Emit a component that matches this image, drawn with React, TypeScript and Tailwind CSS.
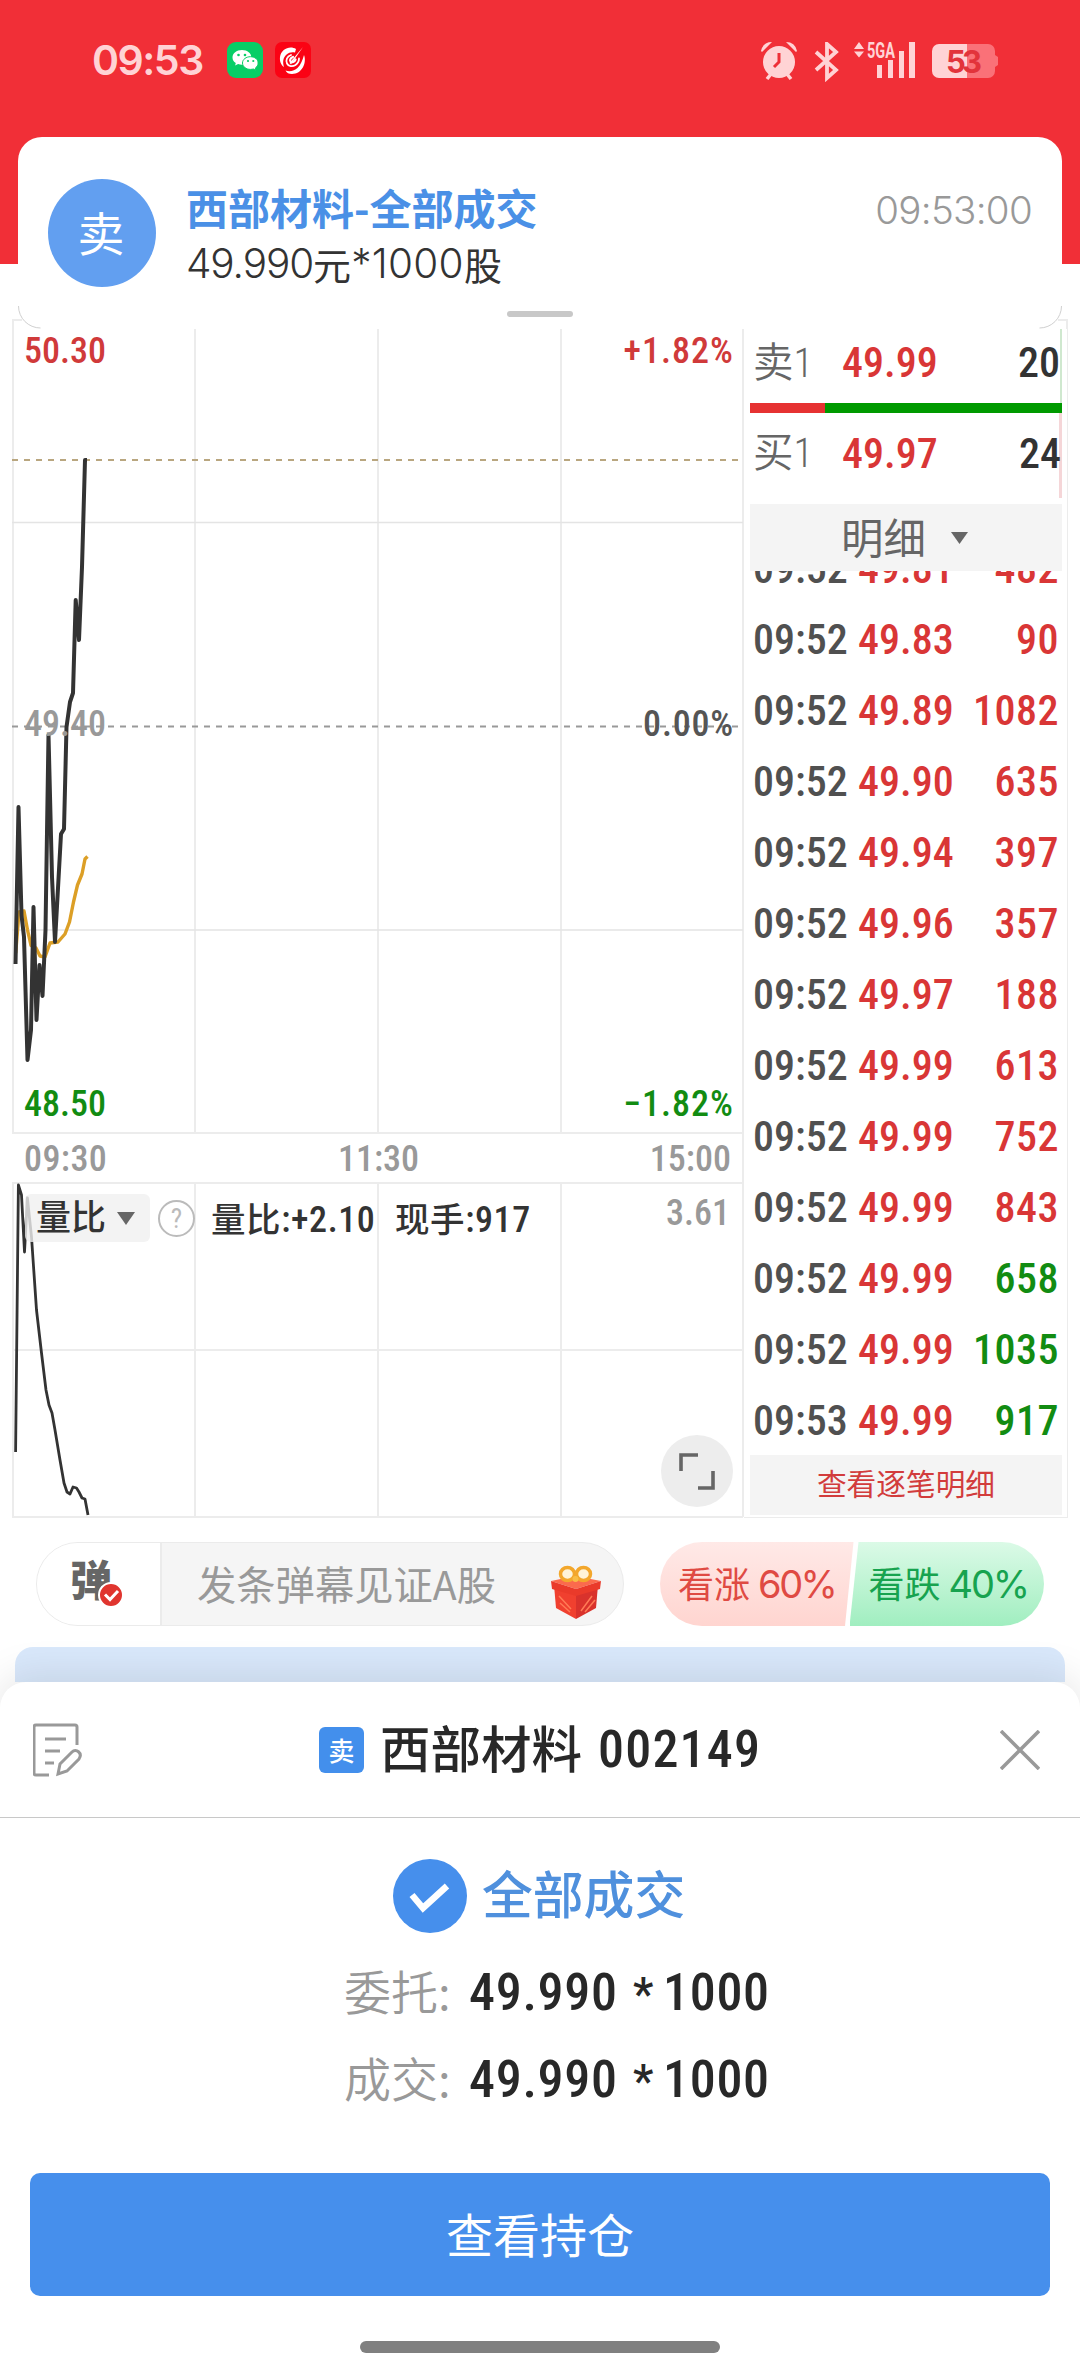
import React from "react";

const PRICE =
  "15.5,964 18.5,807 21.5,915 24,937 27.5,1060 31,1030 33.5,907 36.5,1020 39.5,965 42.5,996 45.5,930 48.5,735 52,877 55,942 61,834 64,829 66.5,727 70,702 73,693 75.7,600 79,640 82,567 85,460 87,460";
const AVERAGE =
  "15.7,953 19,912 24,911 27.5,930 31,945.5 36,948 40,956 45,957 50,943 58,942 65,934 69.5,922 73.5,902 77.5,885 82,874 85,859 87.5,856.5";
const RATIO =
  "15.6,1452 18.4,1185 21.5,1195 24.5,1252 27.4,1198 31.5,1237 36.5,1310 41.5,1353 46,1390 49,1405 52,1413 55,1430 60,1460 64,1483 67,1492 70,1494 73,1487 76.5,1488 79,1492 82,1498 85,1499 88,1515";

const trades = [
  { time: "09:52", price: "49.81", qty: "482", up: true },
  { time: "09:52", price: "49.83", qty: "90", up: true },
  { time: "09:52", price: "49.89", qty: "1082", up: true },
  { time: "09:52", price: "49.90", qty: "635", up: true },
  { time: "09:52", price: "49.94", qty: "397", up: true },
  { time: "09:52", price: "49.96", qty: "357", up: true },
  { time: "09:52", price: "49.97", qty: "188", up: true },
  { time: "09:52", price: "49.99", qty: "613", up: true },
  { time: "09:52", price: "49.99", qty: "752", up: true },
  { time: "09:52", price: "49.99", qty: "843", up: true },
  { time: "09:52", price: "49.99", qty: "658", up: false },
  { time: "09:52", price: "49.99", qty: "1035", up: false },
  { time: "09:53", price: "49.99", qty: "917", up: false },
];

const StatusBar = () => {
  return (
    <div className="flex h-[137px] items-start justify-between pl-[92px] pr-[81px] pt-[42px] text-[#ffd3d5]">
      <div className="flex items-center">
        <span className="w-[135px] font-['Inter'] text-[41px] font-semibold leading-[36px] tracking-[-1.500px]">09:53</span>
        <svg width="36" height="36" viewBox="0 0 36 36">
          <rect width="36" height="36" rx="9" fill="#07ce66" />
          <path d="M15 8c-5.500 0-9.500 3.300-9.500 7.400 0 2.400 1.300 4.300 3.300 5.600l-.7 2.600 3-1.500c1.200.4 2.500.6 3.900.6 5.300 0 9.400-3.300 9.400-7.300S20.400 8 15 8z" fill="#fff" />
          <path d="M23.500 14.700c-4.400 0-8 2.700-8 6.300s3.600 6.400 8 6.400c1.100 0 2-.2 2.900-.4l2.400 1.400-.5-2.300c1.700-1.200 2.800-3 2.800-5.100 0-3.600-3.300-6.300-7.600-6.300z" fill="#fff" stroke="#07ce66" strokeWidth="1" />
          <circle cx="11.500" cy="13" r="1.300" fill="#07ce66" />
          <circle cx="18" cy="13" r="1.300" fill="#07ce66" />
          <circle cx="21" cy="19" r="1.100" fill="#07ce66" />
          <circle cx="26.300" cy="19" r="1.100" fill="#07ce66" />
        </svg>
        <svg width="36" height="36" viewBox="0 0 36 36" className="ml-3">
          <rect width="36" height="36" rx="7" fill="#fb0214" />
          <g fill="#fff">
            <path d="M21 7C15 3 6 7 5 15c-.5 4 1 8 4 10-1.500-5-1-9 2-12 3-2.800 6-3 9-2.500z" />
            <path d="M29 13c3 8-2 19-12 19-3 0-5.500-1-6.500-3.500 4 1.500 9 .5 12-2.500 3.500-3.500 5-8 6.500-13z" />
            <path d="M28 5L14.500 21l1.500 1.500z" />
          </g>
          <g fill="none" stroke="#fff" strokeLinecap="round">
            <path d="M16 13c-4 1.500-5.500 5-4 8.500 1.500 3 5.500 3.500 8.500 1.500 2.500-1.800 3.500-4 3.500-6.500" strokeWidth="1.800" />
            <path d="M18 15c-2.500 1-3.500 3-2.500 4.500 1.500 1.500 4 .5 5-2" strokeWidth="2.200" />
          </g>
        </svg>
      </div>
      <svg width="240" height="40" viewBox="0 0 240 40" fill="#ffd3d5">
        {/* alarm */}
        <circle cx="20" cy="20" r="16" />
        <path d="M2 9Q4 0 13 0L3 10zM38 9Q36 0 27 0l10 10z" />
        <path d="M8 37l4-5M32 37l-4-5" stroke="#ffd3d5" strokeWidth="3.500" />
        <path d="M20 11v9l-5 5" fill="none" stroke="#ee3038" strokeWidth="3" />
        {/* bluetooth */}
        <path d="M57 10l20 18-9 8V2l9 8-20 18" fill="none" stroke="#ffd3d5" strokeWidth="3.800" />
        {/* network */}
        <path d="M95 7l5-7 5 7zM95 9.500h10l-5 6zM118 23h5v13h-5zM129 18h5v18h-5zM140 9h5v27h-5zM150 0h6v36h-6z" />
        <text x="108" y="16" fontFamily="Roboto" fontSize="22" fontWeight="700" textLength="28" lengthAdjust="spacingAndGlyphs">5GA</text>
        {/* battery */}
        <path d="M173 9a7 7 0 0 1 7-7h28v34h-28a7 7 0 0 1-7-7z" />
        <path d="M208 2h21a7 7 0 0 1 7 7v4l3 2v8l-3 2v4a7 7 0 0 1-7 7h-21z" fill="#fa7178" />
        <text x="187" y="31" fontFamily="Inter" fontSize="31" fontWeight="700" fill="#e2333b" textLength="36">53</text>
      </svg>
    </div>
  );
};

const Notice = () => {
  return (
    <div className="relative mx-[18px] h-[192px] rounded-[24px] bg-white">
      <div className="flex items-start pl-[30px] pr-[30px] pt-[42px]">
        <div className="flex size-[108px] items-center justify-center rounded-full bg-[#629ff0] pb-[4px] pr-[2px] text-[47px] text-white">卖</div>
        <div className="ml-[30px] flex-1 whitespace-nowrap">
          <div className="h-[59px] text-[42px] font-bold leading-[56px] text-[#4a90e6]">西部材料-全部成交</div>
          <div className="flex h-[52px] items-center text-[38px] leading-[52px] text-[#333]">
            <span className="font-['Inter'] text-[40.500px] font-[350] tracking-[-1.100px]">49.990</span>
            <span className="pb-px font-normal">元</span>
            <span className="font-['Inter'] text-[40.500px] font-[350] tracking-[0.300px]">*1000</span>
            <span className="pb-px font-normal">股</span>
          </div>
        </div>
        <div className="pt-2 font-['Inter'] text-[38.500px] font-[350] leading-[46px] tracking-[-0.700px] text-[#999]">09:53:00</div>
      </div>
      <div className="absolute bottom-[12px] left-[489px] h-[6px] w-[66px] rounded-full bg-[#c8c8c8]" />
      <svg width="1056" height="26" viewBox="0 0 1056 26" fill="none" className="absolute -left-[6px] bottom-0">
        <path d="M1 26V17h9M1046 17h9v9" stroke="#ececec" strokeWidth="2" />
        <path d="M6.500 3a22 22 0 0 0 22 22M1049.500 3a22 22 0 0 1-22 22" stroke="#d0d0d0" strokeWidth="1" />
      </svg>
    </div>
  );
};

const Chart = () => {
  return (
    <div className="relative h-[1190px] w-[732px] font-['Roboto','Noto_Sans_CJK_SC'] text-[36px] font-[470] leading-[36px] text-[#999] [font-stretch:85%]">
      <svg width="732" height="1190" viewBox="12 329 732 1190" className="absolute inset-0">
        <g stroke="#ececec" strokeWidth="2" fill="none">
          <path d="M13 329V1133M195 329V1133M378 329V1133M561 329V1133M743 329V1517M12 1133H743" />
          <path d="M13 1183V1517M195 1183V1517M378 1183V1517M561 1183V1517M12 1183H743M12 1350H743M12 1517H743" />
          <path d="M12 522.500H743M12 930H743" stroke="#e4e4e4" strokeWidth="1.300" />
        </g>
        <path d="M12 460H743" stroke="#b9a67f" strokeWidth="2" strokeDasharray="6 6" />
        <path d="M12 726.500H743" stroke="#999" strokeWidth="2" strokeDasharray="6 6" />
        <g fill="none" strokeLinejoin="round">
          <polyline points={AVERAGE} stroke="#dc9f26" strokeWidth="3.400" />
          <polyline points={PRICE} stroke="#333" strokeWidth="4" />
          <polyline points={RATIO} stroke="#333" strokeWidth="2.800" />
        </g>
      </svg>
      <div className="relative flex h-[805px] flex-col justify-between pb-[12px] pl-3 pr-[11px] pt-[4px]">
        <div className="flex justify-between text-[#d03a3a]">
          <span>50.30</span>
          <span className="-mr-px tracking-[1px]">+1.82%</span>
        </div>
        <div className="flex justify-between pb-[8px]">
          <span>49.40</span>
          <span className="-mr-px tracking-[0.800px] text-[#555]">0.00%</span>
        </div>
        <div className="flex justify-between text-[#128c12]">
          <span>48.50</span>
          <span className="-mr-px tracking-[1px]">−1.82%</span>
        </div>
      </div>
      <div className="relative flex h-[48px] items-center justify-between pl-3 pr-[13px] pt-[2px]">
        <span className="tracking-[0.400px]">09:30</span>
        <span>11:30</span>
        <span>15:00</span>
      </div>
      <div className="relative flex h-[60px] items-end whitespace-nowrap pl-[13px] pr-[14px]">
        <div className="flex h-[48px] w-[125px] items-center rounded-md bg-[#f0f0f0]/80 pl-[11px] pt-[2px] text-[35px] text-[#333]">
          量比
          <svg width="18" height="13" viewBox="0 0 18 13" className="mb-[2px] ml-[11px]">
            <path d="M0 0h18L9 13z" fill="#666" />
          </svg>
        </div>
        <div className="mb-[5px] ml-2 flex size-[37px] items-center justify-center rounded-full border-[2.500px] border-[#bbb] text-[27px] font-normal text-[#bbb]">?</div>
        <span className="mb-[4px] ml-[16px] w-[184px] tracking-[0.600px] text-[#333]">
          <span className="text-[34.500px]">量比</span>:+2.10
        </span>
        <span className="mb-[4px] tracking-[0.600px] text-[#333]">
          <span className="text-[34.500px]">现手</span>:917
        </span>
        <span className="mb-[11px] ml-auto">3.61</span>
      </div>
      <div className="absolute bottom-[12px] right-[11px] flex size-[72px] items-center justify-center rounded-full bg-[#ededed]">
        <svg width="40" height="40" viewBox="0 0 40 40" fill="none" stroke="#666" strokeWidth="3.600">
          <path d="M4 20V4h17M21 37h15V20" />
        </svg>
      </div>
    </div>
  );
};

const OrderBook = () => {
  return (
    <div className="flex w-[324px] flex-col border-b border-r border-[#ececec] pl-[6px] pr-[5px] font-['Roboto','Noto_Sans_CJK_SC'] text-[42px] font-[470] [font-stretch:85%]">
      <div className="flex h-[74px] items-center border-r-2 border-[#cfe8cf] pb-[8px] pl-[3px] text-[#333]">
        <span className="w-[89px] pt-[2px] text-[40.500px] font-[350] text-[#666]">卖1</span>
        <span className="text-[#d93636]">49.99</span>
        <span className="ml-auto">20</span>
      </div>
      <div className="flex h-[10px]">
        <div className="w-[75px] bg-[#e63232]" />
        <div className="flex-1 bg-[#009a00]" />
      </div>
      <div className="flex h-[85px] items-center border-r-[3px] border-[#f5d6d8] pb-[5px] pl-[3px] text-[#333]">
        <span className="w-[89px] pt-px text-[40.500px] font-[350] text-[#666]">买1</span>
        <span className="text-[#d93636]">49.97</span>
        <span className="-mr-[2px] ml-auto">24</span>
      </div>
      <div className="mt-[6px] flex h-[67px] items-center bg-[#f4f4f4] pl-[91px] pt-[5px] text-[42.500px] font-normal text-[#666]">
        明细
        <svg width="17" height="12" viewBox="0 0 17 12" className="mb-1 ml-[25px]">
          <path d="M0 0h17L8.500 12z" fill="#666" />
        </svg>
      </div>
      <div className="flex h-[884px] flex-col justify-end overflow-hidden">
        {trades.map((trade, i) => (
          <div key={i} className="flex h-[71px] shrink-0 items-center pl-[3px] pr-[3px] pt-[2px]">
            <span className="w-[105px] text-[#505050]">{trade.time}</span>
            <span className="text-[#d93636]">{trade.price}</span>
            <span className={trade.up ? "ml-auto tracking-[0.500px] text-[#d93636]" : "ml-auto tracking-[0.500px] text-[#128c12]"}>{trade.qty}</span>
          </div>
        ))}
      </div>
      <div className="flex h-[60px] items-center justify-center bg-[#f4f4f4] pt-px text-[29.700px] font-normal text-[#d23c3c]">查看逐笔明细</div>
    </div>
  );
};

const Gift = () => {
  return (
    <svg width="50" height="54" viewBox="0 0 50 54">
      <path d="M3 20l22 8v26L5 43z" fill="#f0402f" />
      <path d="M47 20l-22 8v26l20-11z" fill="#d9322c" />
      <path d="M0 16l24-5 26 5-25 8z" fill="#fb6a4d" />
      <path d="M0 16l25 8v7L1 24zM50 16l-25 8v7l24-7z" fill="#ea3a2a" />
      <path d="M8 31l12 13M9 38l10 9M41 31L30 46M44 35L34 47" stroke="#ff7a55" strokeWidth="1.500" />
      <ellipse cx="16.500" cy="9" rx="7" ry="6.500" fill="#fff4d8" stroke="#f3a72c" strokeWidth="3.500" />
      <ellipse cx="32.500" cy="9" rx="7" ry="6.500" fill="#fff4d8" stroke="#f3a72c" strokeWidth="3.500" />
      <circle cx="24.500" cy="14" r="3" fill="#f8bd45" />
    </svg>
  );
};

const Barrage = () => {
  return (
    <div className="flex h-[129px] items-start pl-9 pt-[24px]">
      <div className="flex h-[84px] w-[588px] overflow-hidden rounded-full border border-[#ebebeb] bg-[#f5f5f5]">
        <div className="relative w-[125px] border-r-2 border-[#ebebeb] bg-white pl-[33px] text-[42px] font-black leading-[70px] text-[#666]">
          弹
          <svg width="26" height="26" viewBox="0 0 26 26" className="absolute left-[61px] top-[39px]">
            <circle cx="13" cy="13" r="12" fill="#e0352f" stroke="#fff" strokeWidth="2" />
            <path d="M7 12.500l5 5 8-8.500" fill="none" stroke="#fff" strokeWidth="3" />
          </svg>
        </div>
        <div className="flex flex-1 items-center justify-between pl-[35px] pr-[22px] text-[39.300px] text-[#999]">
          <span className="pb-px font-normal">发条弹幕见证A股</span>
          <div className="pt-[16px]">
            <Gift />
          </div>
        </div>
      </div>
      <div className="ml-9 flex h-[84px] w-[384px] overflow-hidden rounded-full text-[36px] leading-[80px]">
        <div className="w-[194px] bg-linear-to-b from-[#ffe9e7] to-[#ffd5d0] pl-[18px] text-[#df4a43] [clip-path:polygon(0_0,100%_0,185px_100%,0_100%)]">
          看涨 <span className="font-['Inter'] text-[38px] tracking-[-2.500px]">60%</span>
        </div>
        <div className="-ml-[4px] w-[195px] bg-linear-to-b from-[#dbfae7] to-[#a0eec0] pl-[19px] text-[#17a34f] [clip-path:polygon(9px_0,100%_0,100%_100%,0_100%)]">
          看跌 <span className="font-['Inter'] text-[38px] tracking-[-2.200px]">40%</span>
        </div>
      </div>
    </div>
  );
};

const OrderRow = ({ label }: any) => {
  return (
    <div className="flex h-[87px] items-center pl-[344px] pt-[2px]">
      <span className="w-[125px] pb-[5px] text-[47px] font-[350] text-[#999]">{label}:</span>
      <span className="w-[164px] font-['Roboto'] text-[52px] font-[480] tracking-[0.700px] [font-stretch:85%]">49.990</span>
      <span className="w-[30px] pt-1 font-['Roboto'] text-[46px] font-medium">*</span>
      <span className="font-['Roboto'] text-[52px] font-[480] tracking-[0.700px] [font-stretch:85%]">1000</span>
    </div>
  );
};

const ResultSheet = () => {
  return (
    <div className="relative h-[692px] rounded-t-[26px] bg-white text-[#282828] shadow-[0_-6px_40px_rgba(0,0,0,0.1)]">
      <div className="flex h-[136px] items-center border-b border-[#c8c8c8] pl-[33px] pr-[40px]">
        <svg width="50" height="54" viewBox="0 0 50 54" fill="none" stroke="#999" strokeWidth="3">
          <path d="M16 52H3a2 2 0 0 1-2-2V4a2 2 0 0 1 2-2h39a2 2 0 0 1 2 2v18M12 16h21M12 28h15M12 40h9" />
          <path d="M25 51l2-10 12-12c4-4 11 1 7 7L34 48z" />
        </svg>
        <div className="ml-[236px] flex h-[46px] w-[45px] items-center justify-center rounded-[6px] bg-[#438fec] pb-px text-[26px] font-medium text-white">卖</div>
        <div className="ml-[16px] whitespace-nowrap pb-[5px] text-[50.500px] font-medium">西部材料</div>
        <div className="ml-[16px] font-['Roboto'] text-[52px] font-[480] tracking-[1.200px] [font-stretch:85%]">002149</div>
        <svg width="40" height="40" viewBox="0 0 40 40" className="ml-auto" stroke="#999" strokeWidth="3.600">
          <path d="M1 1l38 38M39 1L1 39" />
        </svg>
      </div>
      <div className="flex h-[130px] items-center pl-[393px] pt-[26px]">
        <svg width="74" height="74" viewBox="0 0 74 74">
          <circle cx="37" cy="37" r="37" fill="#468fec" />
          <path d="M19 36l11 13 24-22" fill="none" stroke="#fff" strokeWidth="6.500" />
        </svg>
        <div className="ml-[15px] pb-[9px] text-[50.800px] font-medium leading-[50px] text-[#4f90dd]">全部成交</div>
      </div>
      <OrderRow label="委托" />
      <OrderRow label="成交" />
      <div className="mx-[30px] mt-[51px] flex h-[123px] items-center justify-center rounded-[10px] bg-[#468fec] pb-[2px] text-[47px] font-normal text-white">查看持仓</div>
      <div className="mx-auto mt-[45px] h-[12px] w-[360px] rounded-full bg-[#808080]" />
    </div>
  );
};

const App = () => {
  return (
    <div className="h-[2374px] w-[1080px] overflow-hidden bg-[linear-gradient(#f12f37_264px,#fff_264px)] font-['Noto_Sans_CJK_SC',sans-serif]">
      <StatusBar />
      <Notice />
      <div className="flex h-[1189px] pl-3">
        <Chart />
        <OrderBook />
      </div>
      <Barrage />
      <div className="mx-[15px] h-[35px] rounded-t-[18px] bg-[#d9e8fb]" />
      <ResultSheet />
    </div>
  );
};

export default App;
